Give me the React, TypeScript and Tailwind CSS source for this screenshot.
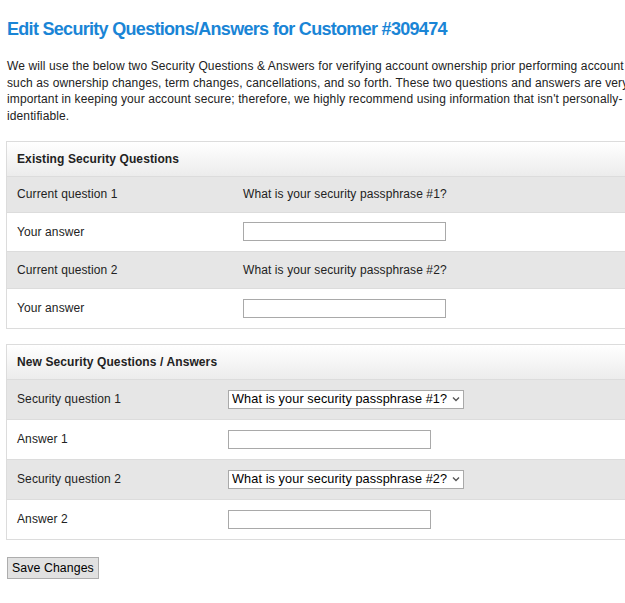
import { useState } from "react";

const font = { fontFamily: '"Liberation Sans", Arial, sans-serif' };

function Section({ title, children }: { title: string; children: React.ReactNode }) {
  return (
    <div className="border border-[#dcdcdc] bg-white">
      <div className="h-[35px] flex items-center px-[10px] bg-gradient-to-b from-white to-[#ececec] border-b border-[#dcdcdc] text-[12px] font-bold text-[#222]">
        {title}
      </div>
      {children}
    </div>
  );
}

function Row({
  label,
  gray,
  labelWidth,
  height,
  last,
  children,
}: {
  label: string;
  gray?: boolean;
  labelWidth: string;
  height: string;
  last?: boolean;
  children: React.ReactNode;
}) {
  return (
    <div
      className={`flex items-center ${height} ${gray ? "bg-[#e6e6e6]" : "bg-white"} ${
        last ? "" : "border-b border-[#dcdcdc]"
      } text-[12px] text-[#222]`}
    >
      <div className={`${labelWidth} pl-[10px] shrink-0`}>{label}</div>
      <div className="flex items-center">{children}</div>
    </div>
  );
}

function QuestionSelect({ value, onChange }: { value: string; onChange: (v: string) => void }) {
  return (
    <div className="relative w-[236px] h-[19px]">
      <select
        value={value}
        onChange={(e) => onChange(e.target.value)}
        className="appearance-none w-full h-full border border-[#a9a9a9] bg-white text-[12.7px] leading-[17px] pl-[3px] pr-[10px] text-black outline-none"
      >
        <option value="1">What is your security passphrase #1?</option>
        <option value="2">What is your security passphrase #2?</option>
      </select>
      <svg
        className="absolute right-[4px] top-[6px] pointer-events-none"
        width="8"
        height="6"
        viewBox="0 0 8 6"
        fill="none"
      >
        <path d="M1 1.5 L4 4.5 L7 1.5" stroke="#555" strokeWidth="1.4" />
      </svg>
    </div>
  );
}

const textBox = "w-[203px] h-[19px] border border-[#a9a9a9] bg-white outline-none px-1 text-[12px]";

export default function App() {
  const [q1, setQ1] = useState("1");
  const [q2, setQ2] = useState("2");

  return (
    <div className="w-[625px] h-[603px] overflow-hidden bg-white tracking-[0.1px]" style={font}>
      <div className="w-[760px] pl-[7px] pt-[18px]">
        <h1 className="text-[18px] leading-[22px] font-bold text-[#1a85d6] tracking-[-0.7px]">
          Edit Security Questions/Answers for Customer #309474
        </h1>
        {/* page is wider than the window, lines run off the right edge */}
        <p className="mt-[18px] text-[12px] leading-[16.7px] text-[#222] whitespace-nowrap tracking-[0.12px]">
          We will use the below two Security Questions &amp; Answers for verifying account ownership prior performing account changes
          <br />
          such as ownership changes, term changes, cancellations, and so forth. These two questions and answers are very
          <br />
          important in keeping your account secure; therefore, we highly recommend using information that isn't personally-
          <br />
          identifiable.
        </p>

        <div className="mt-[16px] -ml-[1px]">
          <Section title="Existing Security Questions">
            <Row label="Current question 1" gray labelWidth="w-[236px]" height="h-[36px]">
              What is your security passphrase #1?
            </Row>
            <Row label="Your answer" labelWidth="w-[236px]" height="h-[39px]">
              <input className={textBox} />
            </Row>
            <Row label="Current question 2" gray labelWidth="w-[236px]" height="h-[37px]">
              What is your security passphrase #2?
            </Row>
            <Row label="Your answer" labelWidth="w-[236px]" height="h-[39px]" last>
              <input className={textBox} />
            </Row>
          </Section>
        </div>

        <div className="mt-[15px] -ml-[1px]">
          <Section title="New Security Questions / Answers">
            <Row label="Security question 1" gray labelWidth="w-[221px]" height="h-[40px]">
              <QuestionSelect value={q1} onChange={setQ1} />
            </Row>
            <Row label="Answer 1" labelWidth="w-[221px]" height="h-[40px]">
              <input className={textBox} />
            </Row>
            <Row label="Security question 2" gray labelWidth="w-[221px]" height="h-[40px]">
              <QuestionSelect value={q2} onChange={setQ2} />
            </Row>
            <Row label="Answer 2" labelWidth="w-[221px]" height="h-[39px]" last>
              <input className={textBox} />
            </Row>
          </Section>
        </div>

        <button className="mt-[17px] h-[22px] px-[4px] border border-[#adadad] bg-[#e1e1e1] text-[12.3px] text-black">
          Save Changes
        </button>
      </div>
    </div>
  );
}
